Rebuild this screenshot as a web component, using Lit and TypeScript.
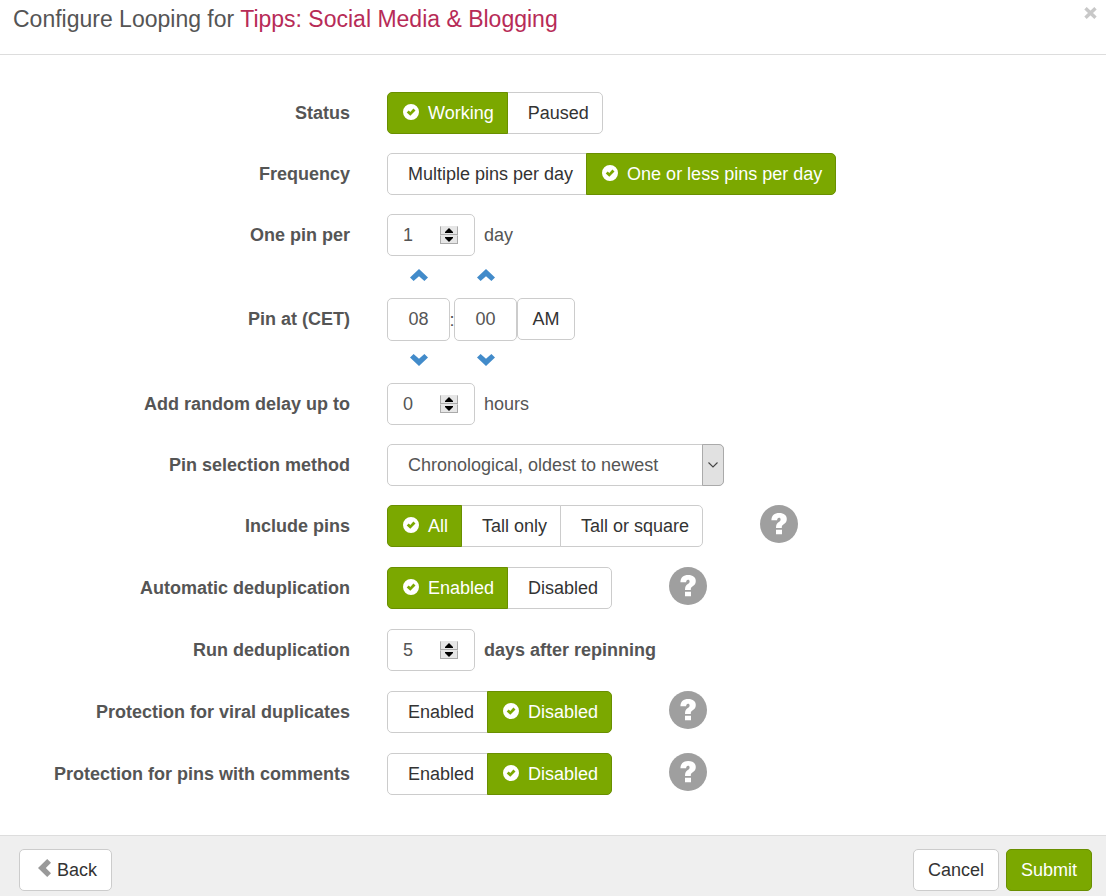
import { LitElement, html, css, svg, nothing } from "lit";
import { customElement, property, state } from "lit/decorators.js";
import { classMap } from "lit/directives/class-map.js";

const controlReset = css`
  :host, *, *::before, *::after { box-sizing: border-box; }
  button, input, select {
    font: inherit;
    color: inherit;
    margin: 0;
  }
  button { cursor: pointer; }
`;

const checkIcon = svg`<svg class="check" viewBox="0 0 16 16" width="16" height="16" aria-hidden="true">
  <path fill="currentColor" fill-rule="evenodd" d="M8 0a8 8 0 1 0 0 16a8 8 0 0 0 0-16zM10.4 4.5L12.5 6.6L7.3 11.8L3.7 8.5L5.7 6.5L7.3 7.9z"/>
</svg>`;

@customElement("segmented-choice")
export class SegmentedChoice extends LitElement {
  @property({ attribute: false }) options: string[] = [];
  @property() value = "";
  @property() label = "";

  static styles = [controlReset, css`
    :host { display: inline-flex; }
    .group { display: flex; }
    .segment {
      display: flex;
      align-items: center;
      gap: 9px;
      height: 42px;
      padding: 0 13px 0 20px;
      border: 1px solid #ccc;
      background: #fff;
      color: #333;
      white-space: nowrap;
    }
    .segment + .segment { margin-left: -1px; }
    .segment:first-child { border-radius: 5px 0 0 5px; }
    .segment:last-child { border-radius: 0 5px 5px 0; }
    .active {
      position: relative;
      z-index: 1;
      padding-left: 15px;
      background: #7ba800;
      border-color: #698f00;
      color: #fff;
    }
    .check { flex: none; margin-bottom: 2px; }
  `];

  render() {
    return html`<div class="group" role="group" aria-label=${this.label}>
      ${this.options.map((o) => html`<button
        type="button"
        class=${classMap({ segment: true, active: o === this.value })}
        aria-pressed=${o === this.value ? "true" : "false"}
        @click=${() => { this.value = o; }}
      >${o === this.value ? checkIcon : nothing}<span>${o}</span></button>`)}
    </div>`;
  }
}

@customElement("number-box")
export class NumberBox extends LitElement {
  @property({ type: Number }) value = 0;
  @property() label = "";

  static styles = [controlReset, css`
    :host { display: inline-flex; }
    .box {
      display: flex;
      align-items: center;
      justify-content: space-between;
      width: 88px;
      height: 42px;
      padding: 0 16px 0 15px;
      border: 1px solid #ccc;
      border-radius: 5px;
      background: #fff;
      color: #555;
    }
    .field {
      width: 32px;
      height: 24px;
      padding: 0;
      border: 0;
      outline: 0;
      background: none;
      appearance: textfield;
    }
    .field::-webkit-inner-spin-button { appearance: none; margin: 0; }
    .spinner { display: flex; flex-direction: column; width: 18px; }
    .step {
      display: flex;
      align-items: center;
      justify-content: center;
      height: 9px;
      padding: 0;
      border: 1px solid #aaa;
      border-top-color: #e6e6e6;
      background: #e6e6e6;
    }
  `];

  private step(by: number) {
    this.value = Math.max(0, this.value + by);
  }

  render() {
    return html`<div class="box">
      <input class="field" type="number" aria-label=${this.label} .value=${String(this.value)}
        @change=${(e: Event) => { this.value = Number((e.target as HTMLInputElement).value); }}>
      <div class="spinner">
        <button class="step" type="button" aria-label="Increase" @click=${() => this.step(1)}>
          <svg width="8" height="5" viewBox="0 0 8 5"><path d="M0 5V4L4 0L8 4V5z"/></svg>
        </button>
        <button class="step" type="button" aria-label="Decrease" @click=${() => this.step(-1)}>
          <svg width="8" height="5" viewBox="0 0 8 5"><path d="M0 0V1L4 5L8 1V0z"/></svg>
        </button>
      </div>
    </div>`;
  }
}

@customElement("app-root")
export class AppRoot extends LitElement {
  @state() private hour = 8;
  @state() private minute = 0;
  @state() private meridiem = "AM";

  static styles = [controlReset, css`
    :host {
      display: flex;
      flex-direction: column;
      min-height: 100vh;
      background: #fff;
      color: #555;
      font: 18px/24px "Liberation Sans", Arial, sans-serif;
    }
    .header {
      display: flex;
      justify-content: space-between;
      align-items: flex-start;
      padding: 4px 9px 20px 13px;
      border-bottom: 1px solid #ddd;
    }
    .title { margin: 0; font-size: 23px; line-height: 30px; font-weight: 400; }
    .board { color: #b72b57; }
    .close { display: flex; padding: 3px 0; border: 0; background: none; }
    .form { flex: 1; padding: 37px 19px 39px 0; }
    .row {
      display: grid;
      grid-template-columns: minmax(0, 1fr) minmax(0, 2fr);
      column-gap: 37px;
      margin-bottom: 19px;
    }
    .row:last-child { margin-bottom: 0; }
    .label { padding-top: 9px; text-align: right; font-weight: 700; }
    .tall { min-height: 43px; }
    .controls { display: flex; align-items: flex-start; }
    .unit { padding: 9px 0 0 9px; }
    .strong { font-weight: 700; }
    .help { display: flex; margin-left: 57px; padding: 0; border: 0; background: none; }
    .time { margin: -19px 0 0; align-items: center; }
    .time .label { padding: 0 0 2px; }
    .clock {
      display: grid;
      grid-template-columns: 63px 4px 63px 58px;
      justify-items: center;
    }
    .arrow {
      display: flex;
      align-items: center;
      justify-content: center;
      width: 63px;
      height: 42px;
      padding: 0 0 4px;
      border: 0;
      background: none;
      color: #428bca;
    }
    .up { grid-row: 1; }
    .down { grid-row: 3; }
    .hour { grid-column: 1; }
    .minute { grid-column: 3; }
    .digits {
      grid-row: 2;
      width: 63px;
      height: 43px;
      padding: 0;
      border: 1px solid #ccc;
      border-radius: 5px;
      background: #fff;
      text-align: center;
    }
    .colon { grid-row: 2; grid-column: 2; align-self: center; }
    .button {
      display: flex;
      align-items: center;
      justify-content: center;
      gap: 6px;
      height: 42px;
      padding: 0 14px;
      border: 1px solid #ccc;
      border-radius: 5px;
      background: #fff;
      color: #333;
    }
    .meridiem { grid-row: 2; grid-column: 4; width: 58px; }
    .back { padding-left: 18px; }
    .primary { background: #7ba800; border-color: #698f00; color: #fff; }
    .select-wrap { display: grid; width: 337px; max-width: 100%; }
    .select {
      grid-area: 1 / 1;
      height: 42px;
      width: 100%;
      padding: 0 30px 0 20px;
      border: 1px solid #ccc;
      border-radius: 5px;
      background: #fff;
      appearance: none;
    }
    .drop {
      grid-area: 1 / 1;
      justify-self: end;
      display: flex;
      align-items: center;
      justify-content: center;
      width: 22px;
      height: 42px;
      border: 1px solid #aaa;
      border-radius: 0 5px 5px 0;
      background: #e1e1e1;
      pointer-events: none;
      z-index: 1;
    }
    .footer {
      display: flex;
      align-items: center;
      justify-content: space-between;
      padding: 13px 14px 5px 19px;
      border-top: 1px solid #ddd;
      background: #efefef;
    }
    .actions { display: flex; gap: 7px; }
  `];

  private pad(n: number) {
    return String(n).padStart(2, "0");
  }

  private turn(part: "hour" | "minute", by: number) {
    if (part === "hour") this.hour = ((this.hour - 1 + by + 12) % 12) + 1;
    else this.minute = (this.minute + by + 60) % 60;
  }

  private arrow(part: "hour" | "minute", by: 1 | -1) {
    const path = by > 0 ? "M9 0L18 8.4L14.4 12L9 7.2L3.6 12L0 8.4z" : "M9 12L0 3.6L3.6 0L9 4.8L14.4 0L18 3.6z";
    return html`<button type="button"
      class=${classMap({ arrow: true, up: by > 0, down: by < 0, [part]: true })}
      aria-label="${by > 0 ? "Later" : "Earlier"} ${part}"
      @click=${() => this.turn(part, by)}>
      <svg width="18" height="12" viewBox="0 0 18 12"><path fill="currentColor" d=${path}/></svg>
    </button>`;
  }

  private help() {
    return html`<button type="button" class="help" aria-label="Help">
      <svg width="38" height="38" viewBox="0 0 38 38">
        <circle cx="19" cy="19" r="19" fill="#9f9f9f"/>
        <path fill="#fff" d="M11.4 15.2C11.6 10.4 14.4 8 19.2 8C24 8 26.8 10.4 26.8 14C26.8 16.8 25.2 18.4 23.4 19.6C22 20.5 21.8 21.2 21.8 22.9H16C16 19.8 16.8 18.4 18.8 17C20.2 16 20.6 15.5 20.6 14.4C20.6 13.3 20.1 12.7 19 12.7C17.8 12.7 17.2 13.6 17.1 15.2zM16 24.7H22V29.3H16z"/>
      </svg>
    </button>`;
  }

  private choice(label: string, options: string[], value: string, help = false) {
    return html`<div class=${classMap({ row: true, tall: help })}>
      <div class="label">${label}</div>
      <div class="controls">
        <segmented-choice .label=${label} .options=${options} .value=${value}></segmented-choice>
        ${help ? this.help() : nothing}
      </div>
    </div>`;
  }

  private amount(label: string, value: number, unit: string, strong = false) {
    return html`<div class=${classMap({ row: true, tall: strong })}>
      <div class="label">${label}</div>
      <div class="controls">
        <number-box .label=${label} .value=${value}></number-box>
        <span class=${classMap({ unit: true, strong })}>${unit}</span>
      </div>
    </div>`;
  }

  render() {
    return html`
      <header class="header">
        <h1 class="title">Configure Looping for <span class="board">Tipps: Social Media &amp; Blogging</span></h1>
        <button type="button" class="close" aria-label="Close">
          <svg width="13" height="12" viewBox="0 0 13 12"><path fill="none" stroke="#c8c8c8" stroke-width="3.4" d="M1.5 1.2L11.5 10.8M11.5 1.2L1.5 10.8"/></svg>
        </button>
      </header>
      <main class="form">
        ${this.choice("Status", ["Working", "Paused"], "Working")}
        ${this.choice("Frequency", ["Multiple pins per day", "One or less pins per day"], "One or less pins per day")}
        ${this.amount("One pin per", 1, "day")}
        <div class="row time">
          <label class="label" for="hour">Pin at (CET)</label>
          <div class="clock">
            ${this.arrow("hour", 1)} ${this.arrow("minute", 1)}
            <input id="hour" class="digits hour" .value=${this.pad(this.hour)}>
            <span class="colon">:</span>
            <input class="digits minute" aria-label="Minute" .value=${this.pad(this.minute)}>
            <button type="button" class="button meridiem"
              @click=${() => { this.meridiem = this.meridiem === "AM" ? "PM" : "AM"; }}>${this.meridiem}</button>
            ${this.arrow("hour", -1)} ${this.arrow("minute", -1)}
          </div>
        </div>
        ${this.amount("Add random delay up to", 0, "hours")}
        <div class="row">
          <label class="label" for="method">Pin selection method</label>
          <div class="select-wrap">
            <select id="method" class="select"><option>Chronological, oldest to newest</option></select>
            <span class="drop"><svg width="10" height="6" viewBox="0 0 10 6"><path fill="none" stroke="#444" stroke-width="1.1" d="M0.5 0.5L5 5L9.5 0.5"/></svg></span>
          </div>
        </div>
        ${this.choice("Include pins", ["All", "Tall only", "Tall or square"], "All", true)}
        ${this.choice("Automatic deduplication", ["Enabled", "Disabled"], "Enabled", true)}
        ${this.amount("Run deduplication", 5, "days after repinning", true)}
        ${this.choice("Protection for viral duplicates", ["Enabled", "Disabled"], "Disabled", true)}
        ${this.choice("Protection for pins with comments", ["Enabled", "Disabled"], "Disabled", true)}
      </main>
      <footer class="footer">
        <button type="button" class="button back">
          <svg width="13" height="22" viewBox="0 0 13 22"><path fill="#999" d="M9.2 0L13 3.8L7.8 9L13 14.2L9.2 18L0 9z"/></svg>
          <span>Back</span>
        </button>
        <div class="actions">
          <button type="button" class="button">Cancel</button>
          <button type="submit" class="button primary">Submit</button>
        </div>
      </footer>
    `;
  }
}
